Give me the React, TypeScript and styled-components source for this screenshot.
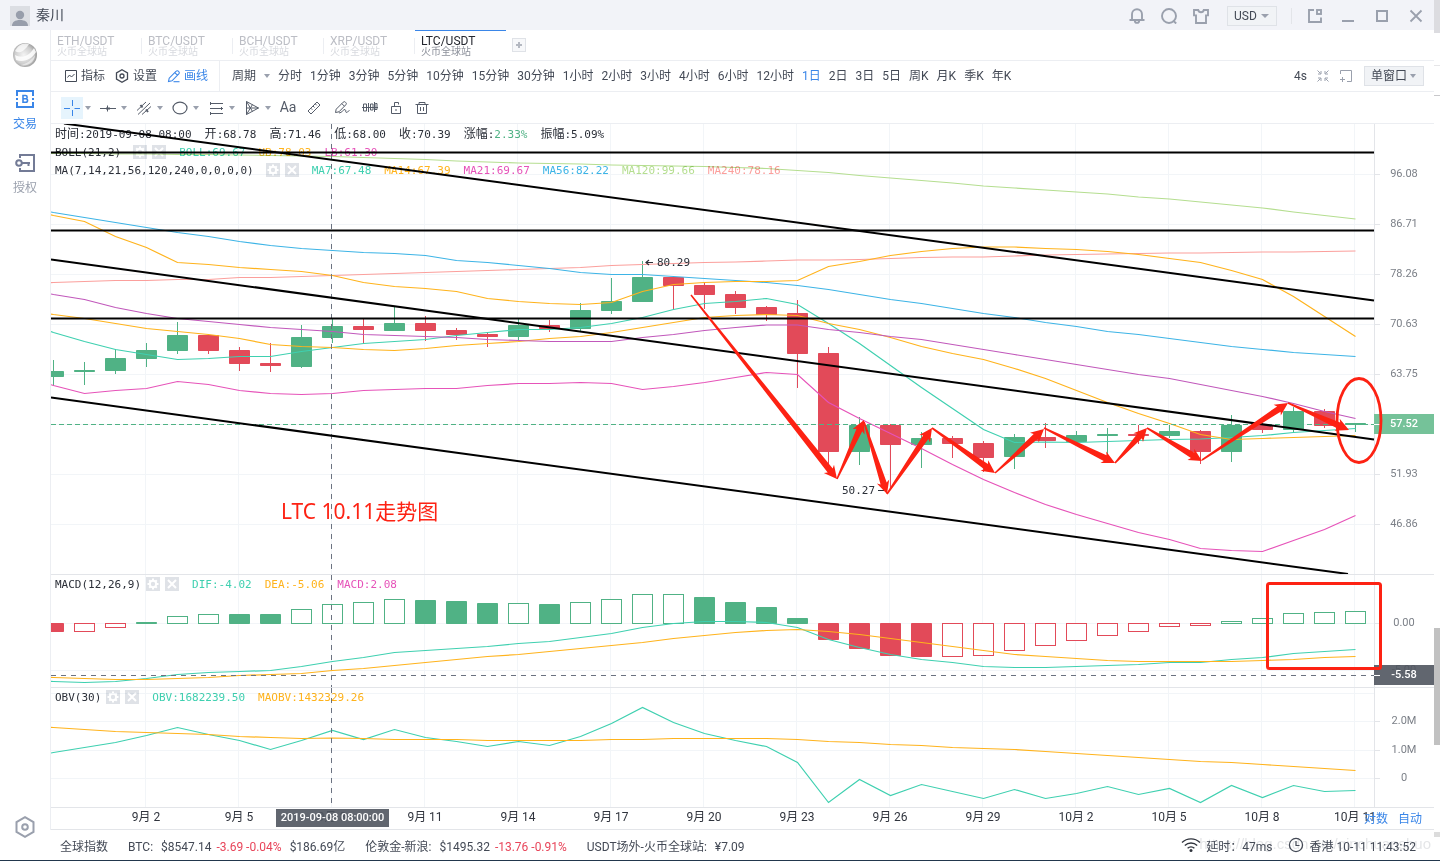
import React from "react";
import styled, { createGlobalStyle } from "styled-components";

/* ---------- theme values ---------- */
const c = {
  blue: "#3a86e8",
  text: "#434955",
  dark: "#2b2f38",
  icon: "#9aa0ad",
  tool: "#555c69",
  line: "#eceef2",
  frame: "#e3e5e9",
  grid: "#f2f5f8",
  green: "#50b285",
  red: "#e24a59",
  teal: "#3fd0b0",
  amber: "#ffb31c",
  magenta: "#e653b9",
  sky: "#3db4e6",
  lime: "#b5de90",
  salmon: "#fb9f9c",
  mark: "#fd2213",
  tag: "#50555f",
};
const sans = `Roboto, "Noto Sans CJK SC", sans-serif`;
const mono = `"DejaVu Sans Mono", "Noto Sans CJK SC", monospace`;

const Global = createGlobalStyle`
  * { box-sizing: border-box; }
  body { margin: 0; background: #fff; font-family: ${sans}; font-size: 12px; color: ${c.text}; }
  button, select { font: inherit; color: inherit; margin: 0; padding: 0; border: 0; background: none; cursor: pointer; }
  svg { flex-shrink: 0; }
`;

/* ---------- page frame ---------- */
const Page = styled.div`
  display: flex;
  min-height: 100vh;
`;
const Window = styled.div`
  flex: 1;
  min-width: 0;
  display: flex;
  flex-direction: column;
  border-bottom: 1px solid #22374d;
`;
const EdgeStrip = styled.div`
  width: 6px;
  display: flex;
  flex-direction: column;
  background: #fff;
  border-bottom: 1px solid #22374d;
`;
const EdgePart = styled.span<{ $h: number; $color?: string }>`
  flex: 0 0 ${(p) => p.$h}px;
  background: ${(p) => p.$color ?? "transparent"};
`;
const TitleBar = styled.header`
  height: 30px;
  display: flex;
  align-items: center;
  padding: 2px 10px 0;
  background: #f2f3f8;
`;
const UserName = styled.span`
  font-size: 14px;
  line-height: 20px;
  margin-left: 6px;
  padding-bottom: 2px;
  color: ${c.text};
  flex: 1;
`;
const TitleGroup = styled.div<{ $gap: number }>`
  display: flex;
  align-items: center;
  gap: ${(p) => p.$gap}px;
`;
const IconButton = styled.button<{ $active?: boolean; $size?: number; $color?: string }>`
  width: ${(p) => p.$size ?? 16}px;
  height: ${(p) => p.$size ?? 16}px;
  display: flex;
  align-items: center;
  justify-content: center;
  color: ${(p) => (p.$active ? c.blue : p.$color ?? c.icon)};
  background: ${(p) => (p.$active ? "#e6f4fd" : "transparent")};
`;
const VRule = styled.span<{ $h: number; $mx: number }>`
  width: 1px;
  height: ${(p) => p.$h}px;
  margin: 0 ${(p) => p.$mx}px;
  background: #e3e5e9;
`;
const SelectBox = styled.label<{ $w: number; $m?: number }>`
  width: ${(p) => p.$w}px;
  height: 20px;
  margin-left: ${(p) => p.$m ?? 0}px;
  display: flex;
  align-items: center;
  justify-content: space-between;
  padding: 0 7px 0 6px;
  border: 1px solid #dfe2e7;
  background: #f1f3f6;
`;
const Select = styled.select`
  appearance: none;
  outline: none;
  flex: 1;
  min-width: 0;
  height: 18px;
  line-height: 18px;
  color: ${c.text};
`;

const Body = styled.div`
  flex: 1;
  display: flex;
`;
const Sidebar = styled.nav`
  flex: 0 0 50px;
  display: flex;
  flex-direction: column;
  align-items: center;
  padding: 12px 0 22px;
`;
const SideButton = styled.button<{ $active?: boolean; $gap: number }>`
  display: flex;
  flex-direction: column;
  align-items: center;
  gap: 6px;
  margin-top: ${(p) => p.$gap}px;
  line-height: 20px;
  color: ${(p) => (p.$active ? c.blue : c.icon)};
`;
const Spacer = styled.span`
  flex: 1;
`;
const Main = styled.main`
  flex: 1;
  min-width: 0;
  display: flex;
  flex-direction: column;
`;
const Workspace = styled.div`
  border-left: 1px solid ${c.line};
`;

/* ---------- symbol tabs ---------- */
const Tabs = styled.div`
  height: 31px;
  display: flex;
  border-bottom: 1px solid ${c.line};
`;
const Tab = styled.button<{ $active?: boolean }>`
  width: 91px;
  display: flex;
  flex-direction: column;
  align-items: flex-start;
  padding: 4px 0 0 6px;
  border-top: 1px solid ${(p) => (p.$active ? c.blue : "transparent")};
  color: ${(p) => (p.$active ? "#23262e" : "#bcbec5")};
  background: ${(p) => (p.$active ? "none" : `linear-gradient(${c.line}, ${c.line}) no-repeat right 0 top 7px / 1px 16px`)};
  line-height: 12px;
  small {
    font-size: 10px;
    line-height: 10px;
    color: ${(p) => (p.$active ? "#8d919b" : "#d8dadf")};
  }
`;
const AddTab = styled.button`
  width: 14px;
  height: 14px;
  margin: 8px 0 0 6px;
  display: flex;
  align-items: center;
  justify-content: center;
  border: 1px solid #dfe2e7;
  background: #f7f8fa;
`;

/* ---------- toolbars ---------- */
const Toolbar = styled.div<{ $h: number }>`
  height: ${(p) => p.$h}px;
  display: flex;
  align-items: center;
  border-bottom: 1px solid ${c.line};
`;
const MenuGroup = styled.div`
  align-self: stretch;
  display: flex;
  align-items: center;
  gap: 10px;
  padding: 0 11px 0 14px;
  border-right: 1px solid ${c.line};
`;
const MenuButton = styled.button<{ $active?: boolean }>`
  display: flex;
  align-items: center;
  gap: 4px;
  line-height: 18px;
  color: ${(p) => (p.$active ? c.blue : c.text)};
`;
const Periods = styled.div`
  display: flex;
  align-items: center;
  gap: 8px;
  padding-left: 12px;
  flex: 1;
  white-space: nowrap;
`;
const Period = styled.button<{ $active?: boolean }>`
  display: flex;
  align-items: center;
  gap: 8px;
  line-height: 18px;
  color: ${(p) => (p.$active ? c.blue : c.text)};
`;
const ToolbarEnd = styled.div`
  display: flex;
  align-items: center;
  gap: 9px;
  padding-right: 10px;
`;
const DrawTools = styled.div`
  display: flex;
  align-items: center;
  gap: 2px;
  padding-left: 10px;
`;
const DrawTool = styled.div<{ $w: number }>`
  display: flex;
  align-items: center;
  width: ${(p) => p.$w}px;
  gap: 2px;
`;

/* ---------- chart ---------- */
const Pane = styled.section`
  position: relative;
  border-bottom: 1px solid ${c.frame};
`;
/* the plot multiplies with the legend below it, so grid lines leave its text dark */
const Plot = styled.svg`
  display: block;
  position: relative;
  width: 100%;
  pointer-events: none;
  overflow: hidden;
  mix-blend-mode: multiply;
`;
const Legend = styled.div<{ $top?: number }>`
  position: absolute;
  left: 4px;
  top: ${(p) => p.$top ?? 0}px;
  font-family: ${mono};
  font-size: 11px;
  color: ${c.dark};
  white-space: nowrap;
`;
const LegendRow = styled.div`
  display: flex;
  align-items: center;
  height: 18px;
  line-height: 16px;
  gap: 13px;
`;
const LegendTitle = styled.span<{ $gap: number }>`
  display: flex;
  align-items: center;
  gap: ${(p) => p.$gap}px;
`;
const Badges = styled.span`
  display: flex;
  gap: 5px;
`;
const Badge = styled.button`
  width: 14px;
  height: 14px;
  display: flex;
  background: #dfe2e7;
`;
const Value = styled.span<{ $color?: string }>`
  padding-top: 2px;
  color: ${(p) => p.$color ?? "inherit"};
`;
const Han = styled.span`
  font-size: 12px;
  line-height: 0;
`;
const ScaleLinks = styled.div`
  position: absolute;
  right: 12px;
  top: 1px;
  display: flex;
  gap: 10px;
  line-height: 20px;
  color: ${c.blue};
`;

/* ---------- footer ---------- */
const Footer = styled.footer`
  position: relative;
  height: 30px;
  display: flex;
  align-items: center;
  padding: 0 18px 0 10px;
  white-space: nowrap;
`;
const Quote = styled.span`
  display: flex;
  align-items: baseline;
  gap: 5px;
  margin-right: 20px;
`;
const QuoteName = styled.span`
  margin-right: 3px;
`;
const Down = styled.span`
  color: #e8455a;
  & + span {
    margin-left: 3px;
  }
`;
const Status = styled.span`
  display: flex;
  align-items: center;
  gap: 5px;
  margin-left: 16px;
`;
const Watermark = styled.span`
  position: absolute;
  right: 3px;
  top: 5px;
  font-family: "Liberation Sans", sans-serif;
  font-size: 15px;
  line-height: 18px;
  color: rgba(90, 95, 105, 0.16);
`;

/* ---------- series data ---------- */
const X0 = 53.5;
const STEP = 31;
const cx = (k: number) => X0 + STEP * k;

type Candle = [0 | 1, number, number, number, number];
const candles: Candle[] = [
  [1, 371, 377, 360, 386], [1, 370, 372, 362, 385], [1, 358, 371, 349, 374], [1, 350, 359, 343, 367],
  [1, 335, 351, 322, 354], [0, 335, 351, 334, 354], [0, 350, 364, 347, 371], [0, 363, 366, 343, 372],
  [1, 337, 367, 325, 368], [1, 326, 338, 319, 343], [0, 326, 330, 319, 343], [1, 323, 331, 307, 331],
  [0, 323, 331, 316, 341], [0, 330, 335, 328, 340], [0, 334, 337, 332, 347], [1, 325, 337, 319, 340],
  [0, 325, 329, 320, 332], [1, 310, 329, 303, 332], [1, 301, 311, 278, 314], [1, 277, 302, 261, 302],
  [0, 277, 286, 276, 310], [0, 285, 295, 282, 309], [0, 294, 308, 291, 314], [0, 307, 315, 306, 321],
  [0, 313, 354, 300, 388], [0, 353, 452, 347, 473], [1, 425, 452, 417, 465], [0, 425, 445, 424, 488],
  [1, 438, 445, 432, 468], [0, 438, 444, 436, 458], [0, 443, 458, 441, 472], [1, 437, 457, 434, 469],
  [0, 437, 441, 423, 448], [1, 435, 442, 431, 442], [1, 434, 436, 428, 461], [0, 434, 436, 425, 444],
  [1, 431, 436, 425, 438], [0, 431, 452, 430, 464], [1, 425, 452, 415, 462], [0, 425, 430, 423, 433],
  [1, 411, 430, 407, 432], [0, 411, 426, 409, 428], [1, 423, 425, 423, 432],
];

const ma56 = [212, 217, 222, 227, 232, 236, 241, 245, 248, 250, 252, 253, 255, 260, 262, 265, 268, 272, 274, 274, 276, 278, 280, 282, 285, 289, 294, 299, 303, 308, 313, 317, 322, 326, 331, 334, 338, 342, 346, 349, 352, 354, 356];
const upper = [215, 221, 236, 247, 262, 264, 267, 269, 271, 275, 282, 286, 288, 291, 298, 301, 303, 304, 302, 291, 284, 282, 281, 281, 280, 266, 261, 255, 251, 248, 246.5, 246.5, 248, 249, 251, 254, 258, 262, 270, 279, 296, 316, 336];
const ma240 = [282, 281, 280, 280, 279, 279, 277, 277, 276, 275, 274, 273, 272, 271, 270, 269, 268, 267, 265, 264, 263, 262, 261.5, 260.5, 259.5, 259.5, 259, 258, 257, 256.5, 256.5, 255.5, 254.5, 254, 253.5, 253, 252.5, 252.5, 252, 251.5, 251.5, 251, 250.5];
const ma120 = [153, 153, 153.5, 153.5, 154, 154, 154.5, 155, 155.5, 156, 157, 158, 159, 160.5, 161.5, 162.5, 163, 163.5, 164.5, 165, 165.5, 166, 167, 168, 170, 172, 175, 177.5, 180, 182.5, 185.5, 187.5, 189.5, 191.5, 193.5, 196.5, 198.5, 201.5, 204.5, 207.5, 211.5, 215, 218.5];
const mid = [294, 299, 307, 313, 318, 321, 324, 327, 329, 331, 334, 335, 336, 337, 339, 340, 341, 341, 341, 337, 334, 330, 327, 324.5, 324.5, 329, 332, 336, 339, 344, 349, 354, 359, 364, 369, 374, 378, 384, 390, 396, 403, 411, 418];
const ma14 = [314, 318, 323, 328, 331, 334, 338, 344, 346, 347, 349, 350, 348, 345, 343, 341, 338, 336, 332, 327, 322, 317, 315, 314, 315, 323, 329, 337, 346, 353, 359, 368, 378, 390, 402, 413, 423, 434, 439, 438, 437, 436, 435];
const ma7 = [332, 341, 349, 354, 359, 358, 356, 356, 351, 347, 343, 341, 339, 335, 332, 329, 329, 327, 323, 317, 309, 303, 301, 298, 304, 323, 343, 365, 387, 408, 429, 442, 441.5, 442, 441, 440, 439, 438.5, 437, 435, 432, 430, 428];
const lower = [385, 393, 390, 388, 381, 384, 390, 393, 394, 393, 390, 389, 388, 388, 385, 383, 383, 382, 383, 389, 386, 382, 377, 372, 374, 402, 418, 433, 448, 464, 479, 492, 504, 514, 523, 532, 539, 548, 550, 551, 540, 529, 515];
const dif = [681, 682, 681, 678, 674, 672, 671, 670, 666, 661, 657, 652, 650, 648, 646, 643, 641, 637, 633, 627, 623, 621, 621, 622, 627, 639, 647, 654, 659, 662, 666, 667, 667, 666, 665, 664, 662, 662, 659, 657, 653, 651, 649];
const dea = [677, 678, 679, 679, 678, 677, 675, 674, 673, 670, 668, 665, 662, 659, 656, 654, 651, 648, 645, 642, 638, 635, 632, 630, 629, 631, 634, 638, 642, 646, 650, 654, 656, 658, 660, 661, 661, 661, 661, 660, 659, 657, 656];
const obv = [752, 747, 742, 735, 727, 734, 740, 749, 740, 730, 739, 729, 737, 741, 746, 741, 745, 736, 723, 707, 722, 733, 740, 746, 762, 802, 779, 795, 784, 791, 798, 789, 798, 793, 786, 794, 788, 802, 785, 797, 785, 791, 790];
const maobv = [727, 729, 731, 732, 733, 734, 736, 737, 738, 737.5, 738, 739, 739, 739, 740, 740, 740, 740, 739, 739, 738, 738, 738, 738, 739, 741, 742, 744, 745, 747, 748, 749, 751, 753, 755, 757, 759, 761, 762, 764, 766, 768, 770];

/* bar end, and whether the bar is filled */
const bars: [number, boolean][] = [
  [632, true], [632, false], [628, false], [622, true], [616, false], [614, false], [614, true], [614, true],
  [609, false], [604, false], [602, false], [599, false], [600, true], [601, true], [603, true], [603, false],
  [604, true], [602, false], [599, false], [594, false], [594, false], [597, true], [602, true], [607, true],
  [618, true], [640, true], [649, true], [656, true], [657, true], [657, false], [656, false], [651, false],
  [646, false], [641, false], [636, false], [632, false], [627, false], [626, false], [621, false], [618, false],
  [613, false], [612, false], [611, false],
];

const arrows: [number, number, number, number][] = [
  [691, 295, 837, 479], [837, 479, 864, 420], [864, 422, 887, 494], [887, 494, 932, 428],
  [932, 428, 995, 473], [995, 473, 1044, 429], [1044, 428, 1115, 463], [1115, 463, 1147, 428],
  [1147, 428, 1202, 461], [1202, 460, 1288, 403], [1288, 403, 1349, 430],
];

const gridX = Array.from({ length: 14 }, (_, i) => 145.5 + 93 * i);

/* a red arrow that widens from its tail to its head */
const taper = ([x1, y1, x2, y2]: [number, number, number, number]) => {
  const len = Math.hypot(x2 - x1, y2 - y1);
  const ux = (x2 - x1) / len;
  const uy = (y2 - y1) / len;
  const at = (d: number, n: number) => `${(x1 + ux * d - uy * n).toFixed(1)},${(y1 + uy * d + ux * n).toFixed(1)}`;
  return [at(0, 0.8), at(len - 11, 3.2), at(len - 13, 6.5), at(len, 0), at(len - 13, -6.5), at(len - 11, -3.2), at(0, -0.8)].join(" ");
};

const Line = ({ data, color }: { data: number[]; color: string }) => {
  const first = data[0] - ((data[1] - data[0]) * 3) / STEP;
  const pts = [`51,${(first + 0.5).toFixed(1)}`, ...data.map((y, k) => `${cx(k)},${y + 0.5}`)];
  return <polyline points={pts.join(" ")} fill="none" stroke={color} strokeWidth="1.2" />;
};

const Grid = ({ top, bottom, rows }: { top: number; bottom: number; rows: number[] }) => (
  <g stroke={c.grid} strokeWidth="1">
    {gridX.map((x) => <line key={x} x1={x} x2={x} y1={top} y2={bottom} />)}
    {rows.map((y) => <line key={y} x1="51" x2="1374" y1={y} y2={y} />)}
    <line x1="1374.5" x2="1374.5" y1={top} y2={bottom} stroke={c.frame} />
  </g>
);

const AxisLabels = ({ items }: { items: [number, string][] }) => (
  <g fontFamily={sans} fontSize="11" fill="#7c8088" textAnchor="middle">
    {items.map(([y, t]) => (
      <g key={t}>
        <line x1="1374" x2="1380" y1={y} y2={y} stroke={c.frame} />
        <text x="1404" y={y + 2.5}>{t}</text>
      </g>
    ))}
  </g>
);

const AxisTag = ({ y, text, fill, opacity = 1 }: { y: number; text: string; fill: string; opacity?: number }) => (
  <g>
    <rect x="1374" y={y} width="60" height="20" fill={fill} fillOpacity={opacity} />
    <line x1="1374" x2="1380" y1={y + 10.5} y2={y + 10.5} stroke="#fff" />
    <text x="1404" y={y + 13} fontFamily={sans} fontSize="11" fontWeight="500" fill="#fff" textAnchor="middle">{text}</text>
  </g>
);

const CrossX = ({ top, bottom }: { top: number; bottom: number }) => (
  <line x1="331.5" x2="331.5" y1={top} y2={bottom} stroke="#6b7280" strokeDasharray="5 5" />
);

/* ---------- icons ---------- */
const Caret = ({ w = 6 }: { w?: number }) => (
  <svg width={w} height="4" viewBox="0 0 6 4" preserveAspectRatio="none"><path d="M0 0h6L3 4z" fill={c.icon} /></svg>
);

const Ico = ({ w = 16, h = 16, sw = 1, children }: { w?: number; h?: number; sw?: number; children: React.ReactNode }) => (
  <svg width={w} height={h} viewBox={`0 0 ${w} ${h}`} fill="none" stroke="currentColor" strokeWidth={sw}>{children}</svg>
);

const BellIcon = () => (
  <Ico sw={1.9}><path d="M3 12V6.200a5 5 0 0 1 10 0V12M.5 12h15M5.800 12.500a2.200 2.400 0 0 0 4.400 0" /></Ico>
);
const SearchIcon = () => (
  <Ico sw={1.9}><circle cx="8" cy="8" r="7" /><path d="M12 12.500l3.200 3" /></Ico>
);
const ShirtIcon = () => (
  <Ico sw={1.9}><path d="M1 2h4.200c.5 3 5.100 3 5.600 0H15v5.400h-2V15H3V7.400H1z" /></Ico>
);
const PopIcon = () => (
  <Ico sw={1.9}><path d="M8 2H3v12h12V9.500" /><rect x="11" y="2" width="4" height="4" /></Ico>
);

const GearBadge = () => (
  <svg width="14" height="14" viewBox="0 0 14 14">
    <circle cx="7" cy="7" r="3.2" fill="none" stroke="#fff" strokeWidth="2" />
    <path d="M7 1.5v2M7 10.5v2M1.5 7h2M10.5 7h2M3.2 3.2l1.3 1.3M9.5 9.5l1.3 1.3M10.8 3.2L9.5 4.5M4.5 9.5l-1.3 1.3" stroke="#fff" strokeWidth="2" />
  </svg>
);
const CloseBadge = () => (
  <svg width="14" height="14" viewBox="0 0 14 14"><path d="M3 3l8 8M11 3l-8 8" stroke="#fff" strokeWidth="2" /></svg>
);

const LegendHead = ({ label, gap }: { label: string; gap: number }) => (
  <LegendTitle $gap={gap}>
    <Value>{label}</Value>
    <Badges>
      <Badge aria-label="设置"><GearBadge /></Badge>
      <Badge aria-label="关闭"><CloseBadge /></Badge>
    </Badges>
  </LegendTitle>
);

/* ---------- sections ---------- */
const periods = ["分时", "1分钟", "3分钟", "5分钟", "10分钟", "15分钟", "30分钟", "1小时", "2小时", "3小时", "4小时", "6小时", "12小时", "1日", "2日", "3日", "5日", "周K", "月K", "季K", "年K"];

const PencilPath = () => <path d="M1.5 12.5L2.200 9.200 9.200 2.200a1.500 1.500 0 0 1 2.200 0l.4.4a1.500 1.500 0 0 1 0 2.200L5 11.800zM7.800 3.600l2.600 2.600" />;

const lineTools: { name: string; icon: React.ReactNode }[] = [
  { name: "十字光标", icon: <Ico><path d="M8.5 0v6M8.5 10v6M0 8.5h6M10.5 8.5h6" /></Ico> },
  { name: "直线", icon: <Ico><path d="M0 8.5h16M7.5 5.500v6" /><path d="M6 8.5h4" strokeWidth="2" /></Ico> },
  { name: "通道线", icon: <Ico><path d="M1 10.500L10 2M2 14.500L14 3M6 14.500l9-8" /><path d="M4.500 5l2 2.500M10 9.500l2 2.500" strokeWidth="2" /></Ico> },
  { name: "图形", icon: <Ico sw={1.2}><ellipse cx="8" cy="8" rx="7" ry="5.800" /></Ico> },
  { name: "斐波那契", icon: <Ico><path d="M2 3.500h13M2 8.500h13M2 13.500h13M2.500 2v3M2.500 12v3M13.500 7v3" /></Ico> },
  { name: "江恩", icon: <Ico><path d="M2.500 1.500v13L14.500 8zM2.500 1.500L8.500 11.500M2.500 14.500L8.500 4.500M2.500 8h12" /></Ico> },
];

const plainTools: { name: string; w: number; icon: React.ReactNode }[] = [
  { name: "文字", w: 24, icon: <svg width="18" height="16" viewBox="0 0 18 16"><text x="9" y="12" fontFamily={sans} fontSize="14" fill="currentColor" textAnchor="middle">Aa</text></svg> },
  { name: "测量", w: 24, icon: <Ico><path d="M2 11L11 2l3 3L5 14zM4.800 8.200l1.500 1.500M7 6l1.500 1.500M9.200 3.800l1.500 1.500" /></Ico> },
  { name: "画笔", w: 28, icon: <Ico><PencilPath /><path d="M5 13c3 0 4.500-4 6-3.500s0 3 1.500 3 1-1.500 3-2" /></Ico> },
  { name: "磁铁", w: 24, icon: <Ico><path d="M0 7.5h16M1.500 4v7h3V4zM6.500 3v9M8.500 4v6h2.500V4zM13.500 3.500h1.500v6h-2v-6zM12.500 2v10" /></Ico> },
  { name: "锁定", w: 24, icon: <Ico><path d="M3.500 6.500h9v7h-9zM6.500 6.500v-4h4v2M8 9v2" /></Ico> },
  { name: "删除", w: 24, icon: <Ico><path d="M1.500 4.500h13M5 4.500v-2h6v2M3.500 4.500v9h9v-9M6.500 7v4M9.500 7v4" /></Ico> },
];

const Header = () => (
  <TitleBar>
    <svg width="20" height="20" viewBox="0 0 20 20">
      <rect width="20" height="20" fill="#dcdee3" />
      <circle cx="10" cy="9" r="4.2" fill="#989eab" />
      <path d="M2 20c0-4 3-6 8-6s8 2 8 6z" fill="#989eab" />
    </svg>
    <UserName>秦川</UserName>
    <TitleGroup $gap={16}>
      <IconButton aria-label="通知"><BellIcon /></IconButton>
      <IconButton aria-label="搜索"><SearchIcon /></IconButton>
      <IconButton aria-label="皮肤"><ShirtIcon /></IconButton>
    </TitleGroup>
    <SelectBox $w={50} $m={18}>
      <Select aria-label="计价货币" defaultValue="USD"><option>USD</option><option>CNY</option></Select>
      <Caret w={8} />
    </SelectBox>
    <VRule $h={16} $mx={14} />
    <TitleGroup $gap={18}>
      <IconButton aria-label="弹出窗口"><PopIcon /></IconButton>
      <IconButton aria-label="最小化"><Ico sw={2}><path d="M2 13h12" /></Ico></IconButton>
      <IconButton aria-label="最大化"><Ico sw={2}><rect x="3" y="3" width="10" height="10" /></Ico></IconButton>
      <IconButton aria-label="关闭"><Ico sw={1.8}><path d="M2.5 2.5l11 11M13.5 2.5l-11 11" /></Ico></IconButton>
    </TitleGroup>
  </TitleBar>
);

const Side = () => (
  <Sidebar>
    <svg width="26" height="26" viewBox="0 0 26 26">
      <defs>
        <radialGradient id="ball" cx="0.45" cy="0.5" r="0.6">
          <stop offset="0" stopColor="#f4f4f4" /><stop offset="0.6" stopColor="#cfcfcf" /><stop offset="1" stopColor="#8d8d8d" />
        </radialGradient>
      </defs>
      <circle cx="13" cy="13" r="12" fill="url(#ball)" />
      <path d="M3 9c4 3 9 1 14-7-6-2-11 1-14 7z" fill="#fff" opacity="0.75" />
      <path d="M3 13c8 4 15 0 19-7l2 4c-4 7-12 11-20 8z" fill="#fff" opacity="0.85" />
      <path d="M8 23c7-1 12-5 15-10 0 6-6 12-15 10z" fill="#fff" opacity="0.55" />
    </svg>
    <SideButton $active $gap={22}>
      <Ico w={18} h={18} sw={2}>
        <path d="M1 6V1h16v5M1 12v5h16v-5M1 8v2M17 8v2" />
        <path d="M7 5.500h2.500a1.600 1.600 0 0 1 0 3.300H7zM7 8.800h2.800a1.700 1.700 0 0 1 0 3.500H7z" strokeWidth="1.6" />
      </Ico>
      交易
    </SideButton>
    <SideButton $gap={20}>
      <svg width="20" height="18" viewBox="0 0 20 18" fill="none" stroke="#737b96" strokeWidth="2">
        <path d="M5 4V1h14v16H5v-3" /><circle cx="4" cy="9" r="2.8" /><path d="M7 9h8M13.500 9v3" />
      </svg>
      授权
    </SideButton>
    <Spacer />
    <IconButton aria-label="系统设置" $size={22}>
      <Ico w={20} h={22} sw={2}><path d="M10 1.200l8.500 4.900v9.800L10 20.800l-8.500-4.900V6.100z" /><circle cx="10" cy="11" r="2.8" /></Ico>
    </IconButton>
  </Sidebar>
);

const PriceChart = () => (
  <Pane>
    <Legend $top={1}>
      <LegendRow>
        <Value><Han>时间</Han>:2019-09-08 08:00</Value>
        <Value><Han>开</Han>:68.78</Value>
        <Value><Han>高</Han>:71.46</Value>
        <Value><Han>低</Han>:68.00</Value>
        <Value><Han>收</Han>:70.39</Value>
        <Value><Han>涨幅</Han>:<Value $color={c.green}>2.33%</Value></Value>
        <Value><Han>振幅</Han>:5.09%</Value>
      </LegendRow>
      <LegendRow>
        <LegendHead label="BOLL(21,2)" gap={12} />
        <Value $color={c.teal}>BOLL:69.67</Value>
        <Value $color={c.amber}>UB:78.03</Value>
        <Value $color={c.magenta}>LB:61.30</Value>
      </LegendRow>
      <LegendRow>
        <LegendHead label="MA(7,14,21,56,120,240,0,0,0,0)" gap={12} />
        <Value $color={c.teal}>MA7:67.48</Value>
        <Value $color={c.amber}>MA14:67.39</Value>
        <Value $color={c.magenta}>MA21:69.67</Value>
        <Value $color={c.sky}>MA56:82.22</Value>
        <Value $color={c.lime}>MA120:99.66</Value>
        <Value $color={c.salmon}>MA240:78.16</Value>
      </LegendRow>
    </Legend>
    <Plot viewBox="51 124 1383 450" role="img" aria-label="LTC/USDT 日K线">
      <Grid top={124} bottom={574} rows={[174.5, 224.5, 274.5, 324.5, 374.5, 424.5, 474.5, 524.5]} />
      {candles.map(([up, top, bottom, high, low], k) => (
        <g key={k} fill={up ? c.green : c.red}>
          <rect x={cx(k) - 0.5} y={high} width="1" height={low - high} />
          <rect x={cx(k) - 10.5} y={top} width="21" height={bottom - top} rx="0.8" />
        </g>
      ))}
      <Line data={ma120} color={c.lime} />
      <Line data={ma240} color={c.salmon} />
      <Line data={ma56} color={c.sky} />
      <Line data={upper} color={c.amber} />
      <Line data={lower} color={c.magenta} />
      <Line data={ma7} color={c.teal} />
      <Line data={ma14} color={c.amber} />
      <Line data={mid} color="#c158bb" />
      <line x1="51" x2="1374" y1="424.5" y2="424.5" stroke={c.green} strokeDasharray="5 3" />
      <CrossX top={124} bottom={574} />
      <g fontFamily={mono} fontSize="11" fill={c.dark}>
        <text x="657" y="266">80.29</text>
        <text x="842" y="494">50.27</text>
        <path d="M646 262.500h7M649 260l-3 2.500 3 2.500M878 490.500h6" fill="none" stroke={c.dark} strokeWidth="1.2" />
      </g>
      <g stroke="#000" strokeWidth="2">
        <path d="M51 152.500H1374M51 230.500H1374M51 318.500H1374" />
        <path d="M64 123.500L1374 300.500M51 259.500L1374 439.500M51 397.500L1348 574" />
      </g>
      <AxisLabels items={[[174.5, "96.08"], [224.5, "86.71"], [274.5, "78.26"], [324.5, "70.63"], [374.5, "63.75"], [474.5, "51.93"], [524.5, "46.86"]]} />
      <AxisTag y={414} text="57.52" fill="#75c299" />
      <g fill={c.mark}>
        {arrows.map((a) => <polygon key={a.join()} points={taper(a)} />)}
      </g>
      <ellipse cx="1359" cy="420.5" rx="22" ry="42" fill="none" stroke={c.mark} strokeWidth="2.8" />
      <text x="281" y="519" fontFamily={`"Noto Sans", "Noto Sans CJK SC", sans-serif`} fontSize="21" fill={c.mark}>LTC 10.11走势图</text>
    </Plot>
  </Pane>
);

const MacdChart = () => (
  <Pane>
    <Legend>
      <LegendRow>
        <LegendHead label="MACD(12,26,9)" gap={5} />
        <Value $color={c.teal}>DIF:-4.02</Value>
        <Value $color={c.amber}>DEA:-5.06</Value>
        <Value $color={c.magenta}>MACD:2.08</Value>
      </LegendRow>
    </Legend>
    <Plot viewBox="51 575 1383 112" role="img" aria-label="MACD">
      <Grid top={575} bottom={687} rows={[623.5, 670.5]} />
      {bars.map(([end, solid], k) => {
        const up = end < 623;
        const color = up ? c.green : c.red;
        const y = up ? end : 623;
        const h = up ? 624 - end : end - 623;
        return solid ? (
          <rect key={k} x={cx(k) - 10.5} y={y} width="21" height={h} rx="0.8" fill={color} />
        ) : (
          <rect key={k} x={cx(k) - 10} y={y + 0.5} width="20" height={h - 1} fill="#fff" stroke={color} />
        );
      })}
      <Line data={dif} color={c.teal} />
      <Line data={dea} color={c.amber} />
      <CrossX top={575} bottom={687} />
      <line x1="51" x2="1374" y1="675.5" y2="675.5" stroke="#6b7280" strokeDasharray="5 5" />
      <AxisLabels items={[[623.5, "0.00"], [670.5, "-5.00"]]} />
      <AxisTag y={665} text="-5.58" fill={c.tag} opacity={0.9} />
      <rect x="1267.5" y="583.5" width="113" height="85" rx="2" fill="none" stroke={c.mark} strokeWidth="3" />
    </Plot>
  </Pane>
);

const ObvChart = () => (
  <Pane>
    <Legend>
      <LegendRow>
        <LegendHead label="OBV(30)" gap={5} />
        <Value $color={c.teal}>OBV:1682239.50</Value>
        <Value $color={c.amber}>MAOBV:1432329.26</Value>
      </LegendRow>
    </Legend>
    <Plot viewBox="51 688 1383 119" role="img" aria-label="OBV">
      <Grid top={688} bottom={807} rows={[693.5, 721.5, 750.5, 778.5]} />
      <Line data={obv} color={c.teal} />
      <Line data={maobv} color={c.amber} />
      <CrossX top={688} bottom={807} />
      <AxisLabels items={[[721.5, "2.0M"], [750.5, "1.0M"], [778.5, "0"]]} />
    </Plot>
  </Pane>
);

const dates = ["9月 2", "9月 5", "9月 8", "9月 11", "9月 14", "9月 17", "9月 20", "9月 23", "9月 26", "9月 29", "10月 2", "10月 5", "10月 8", "10月 11"];

const TimeAxis = () => (
  <Pane>
    <Plot viewBox="51 808 1383 21" role="img" aria-label="时间轴">
      <g fontFamily={sans} fontSize="12" fill="#30343d" textAnchor="middle">
        {dates.map((d, i) => <text key={d} x={gridX[i] + 0.5} y="821">{d}</text>)}
      </g>
      <rect x="276" y="809" width="113" height="18" fill={c.tag} fillOpacity="0.9" />
      <text x="332.5" y="821" fontFamily={sans} fontSize="11" fontWeight="500" fill="#fff" textAnchor="middle">2019-09-08 08:00:00</text>
    </Plot>
    <ScaleLinks>
      <button>对数</button>
      <button>自动</button>
    </ScaleLinks>
  </Pane>
);

const StatusBar = () => (
  <Footer>
    <Quote>全球指数</Quote>
    <Quote><QuoteName>BTC:</QuoteName><span>$8547.14</span><Down>-3.69 -0.04%</Down><span>$186.69亿</span></Quote>
    <Quote><QuoteName>伦敦金-新浪:</QuoteName><span>$1495.32</span><Down>-13.76 -0.91%</Down></Quote>
    <Quote><QuoteName>USDT场外-火币全球站:</QuoteName><span>¥7.09</span></Quote>
    <Spacer />
    <Status>
      <svg width="20" height="16" viewBox="0 0 20 16" fill="none" stroke="#30343d" strokeWidth="1.3">
        <path d="M1 5.500a13 13 0 0 1 18 0M3.800 8.500a9 9 0 0 1 12.400 0M6.600 11.300a5 5 0 0 1 6.800 0" />
        <circle cx="10" cy="13.5" r="1.5" fill="#30343d" stroke="none" />
      </svg>
      延时：47ms
    </Status>
    <Status>
      <Ico w={16} h={16} sw={1.2}><circle cx="8" cy="8" r="6.6" /><path d="M8 4v4.500h3.500" /></Ico>
      香港 10-11 11:43:52
    </Status>
    <Watermark>https://blog.csdn.net/qinchuanshuo</Watermark>
  </Footer>
);

const App = () => (
  <>
    <Global />
    <Page>
      <Window>
        <Header />
        <Body>
          <Side />
          <Main>
            <Workspace>
              <Tabs>
                {["ETH", "BTC", "BCH", "XRP", "LTC"].map((s) => (
                  <Tab key={s} $active={s === "LTC"}>{s}/USDT<small>火币全球站</small></Tab>
                ))}
                <AddTab aria-label="添加"><Ico w={8} h={8} sw={2}><path d="M4 1v6M1 4h6" stroke="#b4b8c1" /></Ico></AddTab>
              </Tabs>
              <Toolbar $h={31}>
                <MenuGroup>
                  <MenuButton><Ico w={12} h={12}><path d="M.5.5h11v11H.5zM2.500 7.500l2-2.500 2 2 3-3" /></Ico>指标</MenuButton>
                  <MenuButton><Ico w={14} h={14} sw={1.3}><path d="M7 .8l5.500 3.100v6.200L7 13.200l-5.500-3.100V3.900z" /><circle cx="7" cy="7" r="2" /></Ico>设置</MenuButton>
                  <MenuButton $active><Ico w={13} h={14} sw={1.1}><PencilPath /><path d="M6.500 12.700h6" /></Ico>画线</MenuButton>
                </MenuGroup>
                <Periods>
                  <Period>周期 <Caret /></Period>
                  {periods.map((p) => <Period key={p} $active={p === "1日"}>{p}</Period>)}
                </Periods>
                <ToolbarEnd>
                  <span>4s</span>
                  <IconButton $size={14} aria-label="收缩"><Ico w={14} h={14}><path d="M1.500 1.500l3 3M5 2v3H2M12.500 1.500l-3 3M9 2v3h3M1.500 12.500l3-3M5 12V9H2M12.500 12.500l-3-3M9 12V9h3" /></Ico></IconButton>
                  <IconButton $size={14} aria-label="新建区域"><Ico w={14} h={14}><path d="M1.500 5V1.500h11v11H8M1 10.500h5M3.500 8v5" /></Ico></IconButton>
                  <SelectBox $w={60} $m={2}>
                    <Select aria-label="窗口布局" defaultValue="单窗口"><option>单窗口</option><option>双窗口</option></Select>
                    <Caret />
                  </SelectBox>
                </ToolbarEnd>
              </Toolbar>
              <Toolbar $h={32}>
                <DrawTools>
                  {lineTools.map((t, i) => (
                    <DrawTool key={t.name} $w={34}>
                      <IconButton $size={22} $active={i === 0} $color={c.tool} aria-label={t.name}>{t.icon}</IconButton>
                      <Caret />
                    </DrawTool>
                  ))}
                  {plainTools.map((t) => (
                    <DrawTool key={t.name} $w={t.w}>
                      <IconButton $size={t.w - 2} $color={c.tool} aria-label={t.name}>{t.icon}</IconButton>
                    </DrawTool>
                  ))}
                </DrawTools>
              </Toolbar>
              <PriceChart />
              <MacdChart />
              <ObvChart />
              <TimeAxis />
            </Workspace>
            <StatusBar />
          </Main>
        </Body>
      </Window>
      <EdgeStrip>
        <EdgePart $h={33} $color="#dcdce0" />
        <EdgePart $h={32} />
        <EdgePart $h={1} $color="#e6e6e8" />
        <EdgePart $h={29} />
        <EdgePart $h={1} $color="#c8c8cb" />
        <Spacer />
        <EdgePart $h={117} $color="#c1c1c1" />
        <EdgePart $h={87} />
        <EdgePart $h={5} $color="#dcdcdc" />
        <EdgePart $h={23} />
      </EdgeStrip>
    </Page>
  </>
);

export default App;
